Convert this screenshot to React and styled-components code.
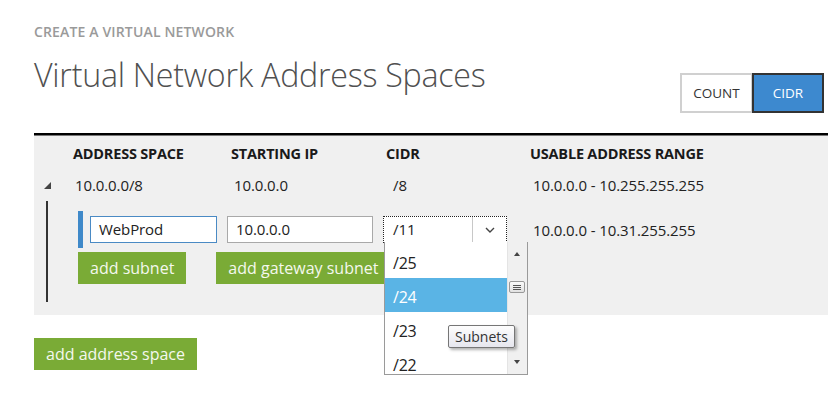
import React from 'react'
import styled, { createGlobalStyle } from 'styled-components'

const GlobalStyle = createGlobalStyle`
  body {
    margin: 0;
    background: #fff;
    font-family: "Open Sans", "Noto Sans", sans-serif;
    color: #222;
  }
`

const Page = styled.div`
  width: 832px;
  height: 402px;
  padding: 22px 4px 0 34px;
  box-sizing: border-box;
  position: relative;
  overflow: hidden;
`

const Top = styled.div`
  display: flex;
  justify-content: space-between;
  align-items: flex-end;
  padding-right: 4px;
  margin-bottom: 20px;
`

const Kicker = styled.div`
  font-size: 14px;
  font-weight: 600;
  color: #9a9a9a;
  letter-spacing: 0.15px;
  line-height: 20px;
`

const Title = styled.h1`
  margin: 11px 0 0;
  padding-bottom: 16px;
  font-size: 32.2px;
  font-weight: 300;
  color: #505050;
  letter-spacing: -0.25px;
  line-height: 44px;
`

const Toggle = styled.div`
  display: flex;
  height: 40px;
`

const ToggleBtn = styled.button`
  width: ${p => p.$w}px;
  border: 2px solid ${p => (p.$on ? '#333' : '#d0d0d0')};
  background: ${p => (p.$on ? '#3d89cf' : '#fff')};
  color: ${p => (p.$on ? '#fff' : '#333')};
  font-family: inherit;
  font-size: 13.5px;
  padding: 0;
  margin-left: ${p => (p.$on ? '-1px' : '0')};
`

const Panel = styled.div`
  background: #f0f0f0;
  border-top: 2px solid #000;
  box-shadow: inset 0 1px 0 #777;
  padding: 9px 0 13px;
`

const Grid = styled.div`
  display: grid;
  grid-template-columns: 39px 158px 155px 144px 1fr;
  align-items: center;
`

const Head = styled.div`
  font-size: 14.5px;
  font-weight: 700;
  color: #1a1a1a;
  letter-spacing: -0.2px;
  line-height: 20px;
`

const Cell = styled.div`
  font-size: 15px;
  line-height: 22px;
  padding-left: ${p => p.$pl || 2}px;
  margin-top: 10px;
  letter-spacing: -0.1px;
  color: #222;
`

const Expander = styled.div`
  margin-top: 10px;
  margin-left: 10px;
  width: 0;
  height: 0;
  border-style: solid;
  border-width: 0 0 7px 7px;
  border-color: transparent transparent #444 transparent;
`

const Subnets = styled.div`
  display: flex;
  margin-top: 5px;
`

const TreeLine = styled.div`
  width: 2px;
  height: 101px;
  background: #333;
  margin-left: 12px;
  margin-right: 30px;
`

const SubnetBody = styled.div`
  padding-top: 10px;
`

const SubnetRow = styled.div`
  display: flex;
  align-items: center;
`

const Marker = styled.div`
  width: 5px;
  height: 37px;
  background: #3f89c9;
  margin-right: 7px;
`

const Field = styled.div`
  width: ${p => p.$w}px;
  height: 27px;
  box-sizing: border-box;
  border: 1px solid ${p => (p.$focus ? '#4a8ac4' : '#a9a9a9')};
  background: #fff;
  font-size: 15px;
  line-height: 25px;
  padding-left: 8px;
  margin-right: 10px;
  letter-spacing: -0.1px;
`

const SelectWrap = styled.div`
  position: relative;
  width: 124px;
  height: 27px;
`

const SelectBox = styled.div`
  display: flex;
  height: 27px;
  box-sizing: border-box;
  border: 1px dotted #222;
  background: #fff;
  font-size: 15px;
  line-height: 25px;
`

const SelectValue = styled.div`
  flex: 1;
  padding-left: 9px;
  border-right: 1px solid #c8c8c8;
`

const Chevron = styled.div`
  width: 33px;
  display: flex;
  align-items: center;
  justify-content: center;
`

const Listbox = styled.div`
  position: absolute;
  top: 26px;
  left: 1px;
  width: 144px;
  height: 133px;
  box-sizing: border-box;
  border: 1px solid #9a9a9a;
  border-top: none;
  background: #fff;
  display: flex;
  overflow: hidden;
  z-index: 2;
`

const Options = styled.div`
  flex: 1;
  padding-top: 2px;
`

const Option = styled.div`
  height: 34px;
  line-height: 38px;
  overflow: hidden;
  padding-left: 8px;
  font-size: 16px;
  letter-spacing: -0.2px;
  background: ${p => (p.$active ? '#5ab4e5' : '#fff')};
  color: ${p => (p.$active ? '#fff' : '#222')};
`

const Scrollbar = styled.div`
  width: 19px;
  background: #f0f0f0;
  border-left: 1px solid #e4e4e4;
  position: relative;
`

const Thumb = styled.div`
  position: absolute;
  top: 39px;
  left: 1px;
  width: 16px;
  height: 12px;
  box-sizing: border-box;
  border: 1px solid #999;
  border-radius: 2px;
  background: linear-gradient(#fafafa, #e2e2e2);
  display: flex;
  flex-direction: column;
  justify-content: center;
  align-items: center;
  gap: 1px;
  span {
    width: 8px;
    height: 1px;
    background: #555;
  }
`

const Arrow = styled.div`
  position: absolute;
  left: 6px;
  ${p => (p.$down ? 'bottom: 10px;' : 'top: 10px;')}
  width: 0;
  height: 0;
  border-left: 3.5px solid transparent;
  border-right: 3.5px solid transparent;
  ${p => (p.$down ? 'border-top: 4px solid #444;' : 'border-bottom: 4px solid #444;')}
`

const Tooltip = styled.div`
  position: absolute;
  top: 109px;
  left: 65px;
  padding: 0 6px;
  height: 23px;
  line-height: 21px;
  box-sizing: border-box;
  font-size: 14px;
  color: #333;
  background: linear-gradient(#fdfdfd, #e6e6ee);
  border: 1px solid #767676;
  border-radius: 2px;
  box-shadow: 2px 2px 3px rgba(0, 0, 0, 0.3);
  white-space: nowrap;
  z-index: 3;
`

const Range = styled.div`
  margin-left: 26px;
  font-size: 15px;
  letter-spacing: -0.1px;
`

const Actions = styled.div`
  display: flex;
  gap: 30px;
  margin-top: 4px;
`

const GreenButton = styled.button`
  height: 32px;
  padding: 0 12px;
  border: none;
  background: #7aab36;
  color: #f4f8ee;
  font-family: inherit;
  font-size: 16px;
  letter-spacing: 0;
`

const Footer = styled.div`
  margin-top: 23px;
`

const cidrOptions = ['/25', '/24', '/23', '/22']

export default function App() {
  return (
    <Page>
      <GlobalStyle />
      <Top>
        <div>
          <Kicker>CREATE A VIRTUAL NETWORK</Kicker>
          <Title>Virtual Network Address Spaces</Title>
        </div>
        <Toggle>
          <ToggleBtn $w={73}>COUNT</ToggleBtn>
          <ToggleBtn $w={72} $on>CIDR</ToggleBtn>
        </Toggle>
      </Top>

      <Panel>
        <Grid>
          <div />
          <Head>ADDRESS SPACE</Head>
          <Head>STARTING IP</Head>
          <Head>CIDR</Head>
          <Head>USABLE ADDRESS RANGE</Head>

          <Expander />
          <Cell>10.0.0.0/8</Cell>
          <Cell $pl={3}>10.0.0.0</Cell>
          <Cell $pl={7}>/8</Cell>
          <Cell $pl={3}>10.0.0.0 - 10.255.255.255</Cell>
        </Grid>

        <Subnets>
          <TreeLine />
          <SubnetBody>
            <SubnetRow>
              <Marker />
              <Field $w={127} $focus>WebProd</Field>
              <Field $w={146}>10.0.0.0</Field>
              <SelectWrap>
                <SelectBox>
                  <SelectValue>/11</SelectValue>
                  <Chevron>
                    <svg width="10" height="6" viewBox="0 0 10 6">
                      <path d="M1 1 L5 5 L9 1" fill="none" stroke="#444" strokeWidth="1.4" />
                    </svg>
                  </Chevron>
                </SelectBox>
                <Listbox>
                  <Options>
                    {cidrOptions.map(o => (
                      <Option key={o} $active={o === '/24'}>{o}</Option>
                    ))}
                  </Options>
                  <Scrollbar>
                    <Arrow />
                    <Thumb><span /><span /><span /></Thumb>
                    <Arrow $down />
                  </Scrollbar>
                </Listbox>
                <Tooltip>Subnets</Tooltip>
              </SelectWrap>
              <Range>10.0.0.0 - 10.31.255.255</Range>
            </SubnetRow>
            <Actions>
              <GreenButton>add subnet</GreenButton>
              <GreenButton>add gateway subnet</GreenButton>
            </Actions>
          </SubnetBody>
        </Subnets>
      </Panel>

      <Footer>
        <GreenButton>add address space</GreenButton>
      </Footer>
    </Page>
  )
}
